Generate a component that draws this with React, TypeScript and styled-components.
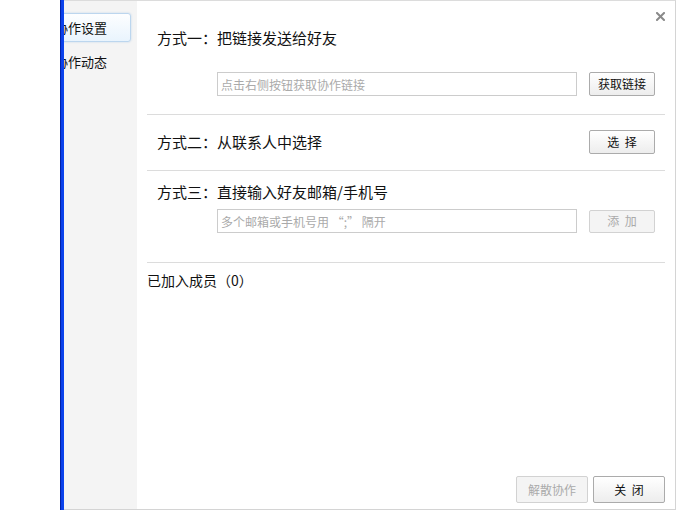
import React from "react";
import styled, { createGlobalStyle } from "styled-components";

const GlobalStyle = createGlobalStyle`
  html, body { margin: 0; padding: 0; background: #ffffff; }
  body { font-family: "Noto Sans CJK SC", "Liberation Sans", sans-serif; color: #111; }
  * { box-sizing: border-box; }
`;

const Page = styled.div`
  width: 676px;
  height: 510px;
  padding-left: 60px;
  display: flex;
`;

const Dialog = styled.div`
  flex: 1;
  height: 510px;
  display: flex;
  border-top: 1px solid #dcdcdc;
  border-right: 1px solid #d4d4d4;
  border-bottom: 1px solid #d4d4d4;
  background: #fff;
`;

const BlueEdge = styled.div`
  width: 4px;
  flex: none;
  background: linear-gradient(to right, #0022aa 0, #0022aa 1px, #0b3fe6 1px, #0b44f0 100%);
  margin-top: -1px;
  margin-bottom: -1px;
`;

const Sidebar = styled.div`
  width: 73px;
  flex: none;
  background: #f4f4f4;
  overflow: hidden;
  padding-top: 12px;
  display: flex;
  flex-direction: column;
  gap: 5px;
`;

const Tab = styled.div<{ $active?: boolean }>`
  height: 29px;
  margin: 0 6px 0 -16px;
  padding-left: 6px;
  display: flex;
  align-items: center;
  font-size: 13px;
  white-space: nowrap;
  color: #111;
  border-radius: 3px;
  border: 1px solid ${(p) => (p.$active ? "#bcd6ee" : "transparent")};
  background: ${(p) => (p.$active ? "linear-gradient(#fdfeff, #e9f4fd)" : "transparent")};
  box-shadow: ${(p) => (p.$active ? "0 0 2px rgba(120,170,220,0.45)" : "none")};
`;

const Main = styled.div`
  flex: 1;
  position: relative;
  display: flex;
  flex-direction: column;
  padding: 0 10px;
`;

const CloseButton = styled.button`
  position: absolute;
  top: 10px;
  right: 9px;
  width: 11px;
  height: 11px;
  padding: 0;
  border: none;
  background: transparent;
  display: flex;
  align-items: center;
  justify-content: center;
  cursor: pointer;
`;

const Section = styled.div<{ $pt: number; $pb: number }>`
  padding: ${(p) => p.$pt}px 10px ${(p) => p.$pb}px 10px;
  border-bottom: 1px solid #dcdcdc;
  display: flex;
  flex-direction: column;
`;

const Title = styled.div`
  font-size: 15px;
  line-height: 20px;
  height: 20px;
  white-space: nowrap;
  color: #111;
`;

const SpaceRow = styled.div`
  display: flex;
  align-items: center;
  justify-content: space-between;
  height: 24px;
`;

const InputRow = styled.div<{ $mt: number }>`
  display: flex;
  align-items: center;
  gap: 12px;
  margin-top: ${(p) => p.$mt}px;
  padding-left: 60px;
`;

const TextInput = styled.input`
  width: 360px;
  height: 24px;
  border: 1px solid #cccccc;
  padding: 0 3px;
  font-family: "Noto Sans CJK SC", "Liberation Sans", sans-serif;
  font-size: 12px;
  color: #333;
  outline: none;
  &::placeholder { color: #aaaaaa; }
`;

const Button = styled.button<{ $w: number; $h: number; $disabled?: boolean }>`
  width: ${(p) => p.$w}px;
  height: ${(p) => p.$h}px;
  flex: none;
  padding: 0;
  border-radius: 2px;
  font-family: "Noto Sans CJK SC", "Liberation Sans", sans-serif;
  font-size: 12px;
  word-spacing: 3px;
  line-height: 1;
  color: ${(p) => (p.$disabled ? "#aaaaaa" : "#111")};
  border: 1px solid ${(p) => (p.$disabled ? "#d2d2d2" : "#ababab")};
  background: ${(p) => (p.$disabled ? "#f4f4f4" : "linear-gradient(#ffffff, #ededed)")};
  cursor: ${(p) => (p.$disabled ? "default" : "pointer")};
`;

const Members = styled.div`
  padding-top: 7px;
  font-size: 14px;
  line-height: 20px;
  color: #111;
`;

const Footer = styled.div`
  margin-top: auto;
  padding-bottom: 6px;
  display: flex;
  justify-content: flex-end;
  gap: 5px;
`;

export default function App() {
  return (
    <>
      <GlobalStyle />
      <Page>
        <Dialog>
          <BlueEdge />
          <Sidebar>
            <Tab $active>协作设置</Tab>
            <Tab>协作动态</Tab>
          </Sidebar>
          <Main>
            <CloseButton aria-label="关闭">
              <svg width="9" height="9" viewBox="0 0 9 9">
                <path d="M1 1 L8 8 M8 1 L1 8" stroke="#8a8a8a" strokeWidth="2" strokeLinecap="square" />
              </svg>
            </CloseButton>
            <Section $pt={27} $pb={18}>
              <Title>方式一：把链接发送给好友</Title>
              <InputRow $mt={24}>
                <TextInput placeholder="点击右侧按钮获取协作链接" readOnly />
                <Button $w={66} $h={24}>获取链接</Button>
              </InputRow>
            </Section>
            <Section $pt={15} $pb={16}>
              <SpaceRow>
                <Title>方式二：从联系人中选择</Title>
                <Button $w={66} $h={24}>选 择</Button>
              </SpaceRow>
            </Section>
            <Section $pt={11} $pb={29}>
              <Title>方式三：直接输入好友邮箱/手机号</Title>
              <InputRow $mt={7}>
                <TextInput placeholder="多个邮箱或手机号用 “;” 隔开" />
                <Button $w={66} $h={23} $disabled>添 加</Button>
              </InputRow>
            </Section>
            <Members>已加入成员（0）</Members>
            <Footer>
              <Button $w={72} $h={27} $disabled>解散协作</Button>
              <Button $w={72} $h={27}>关 闭</Button>
            </Footer>
          </Main>
        </Dialog>
      </Page>
    </>
  );
}
